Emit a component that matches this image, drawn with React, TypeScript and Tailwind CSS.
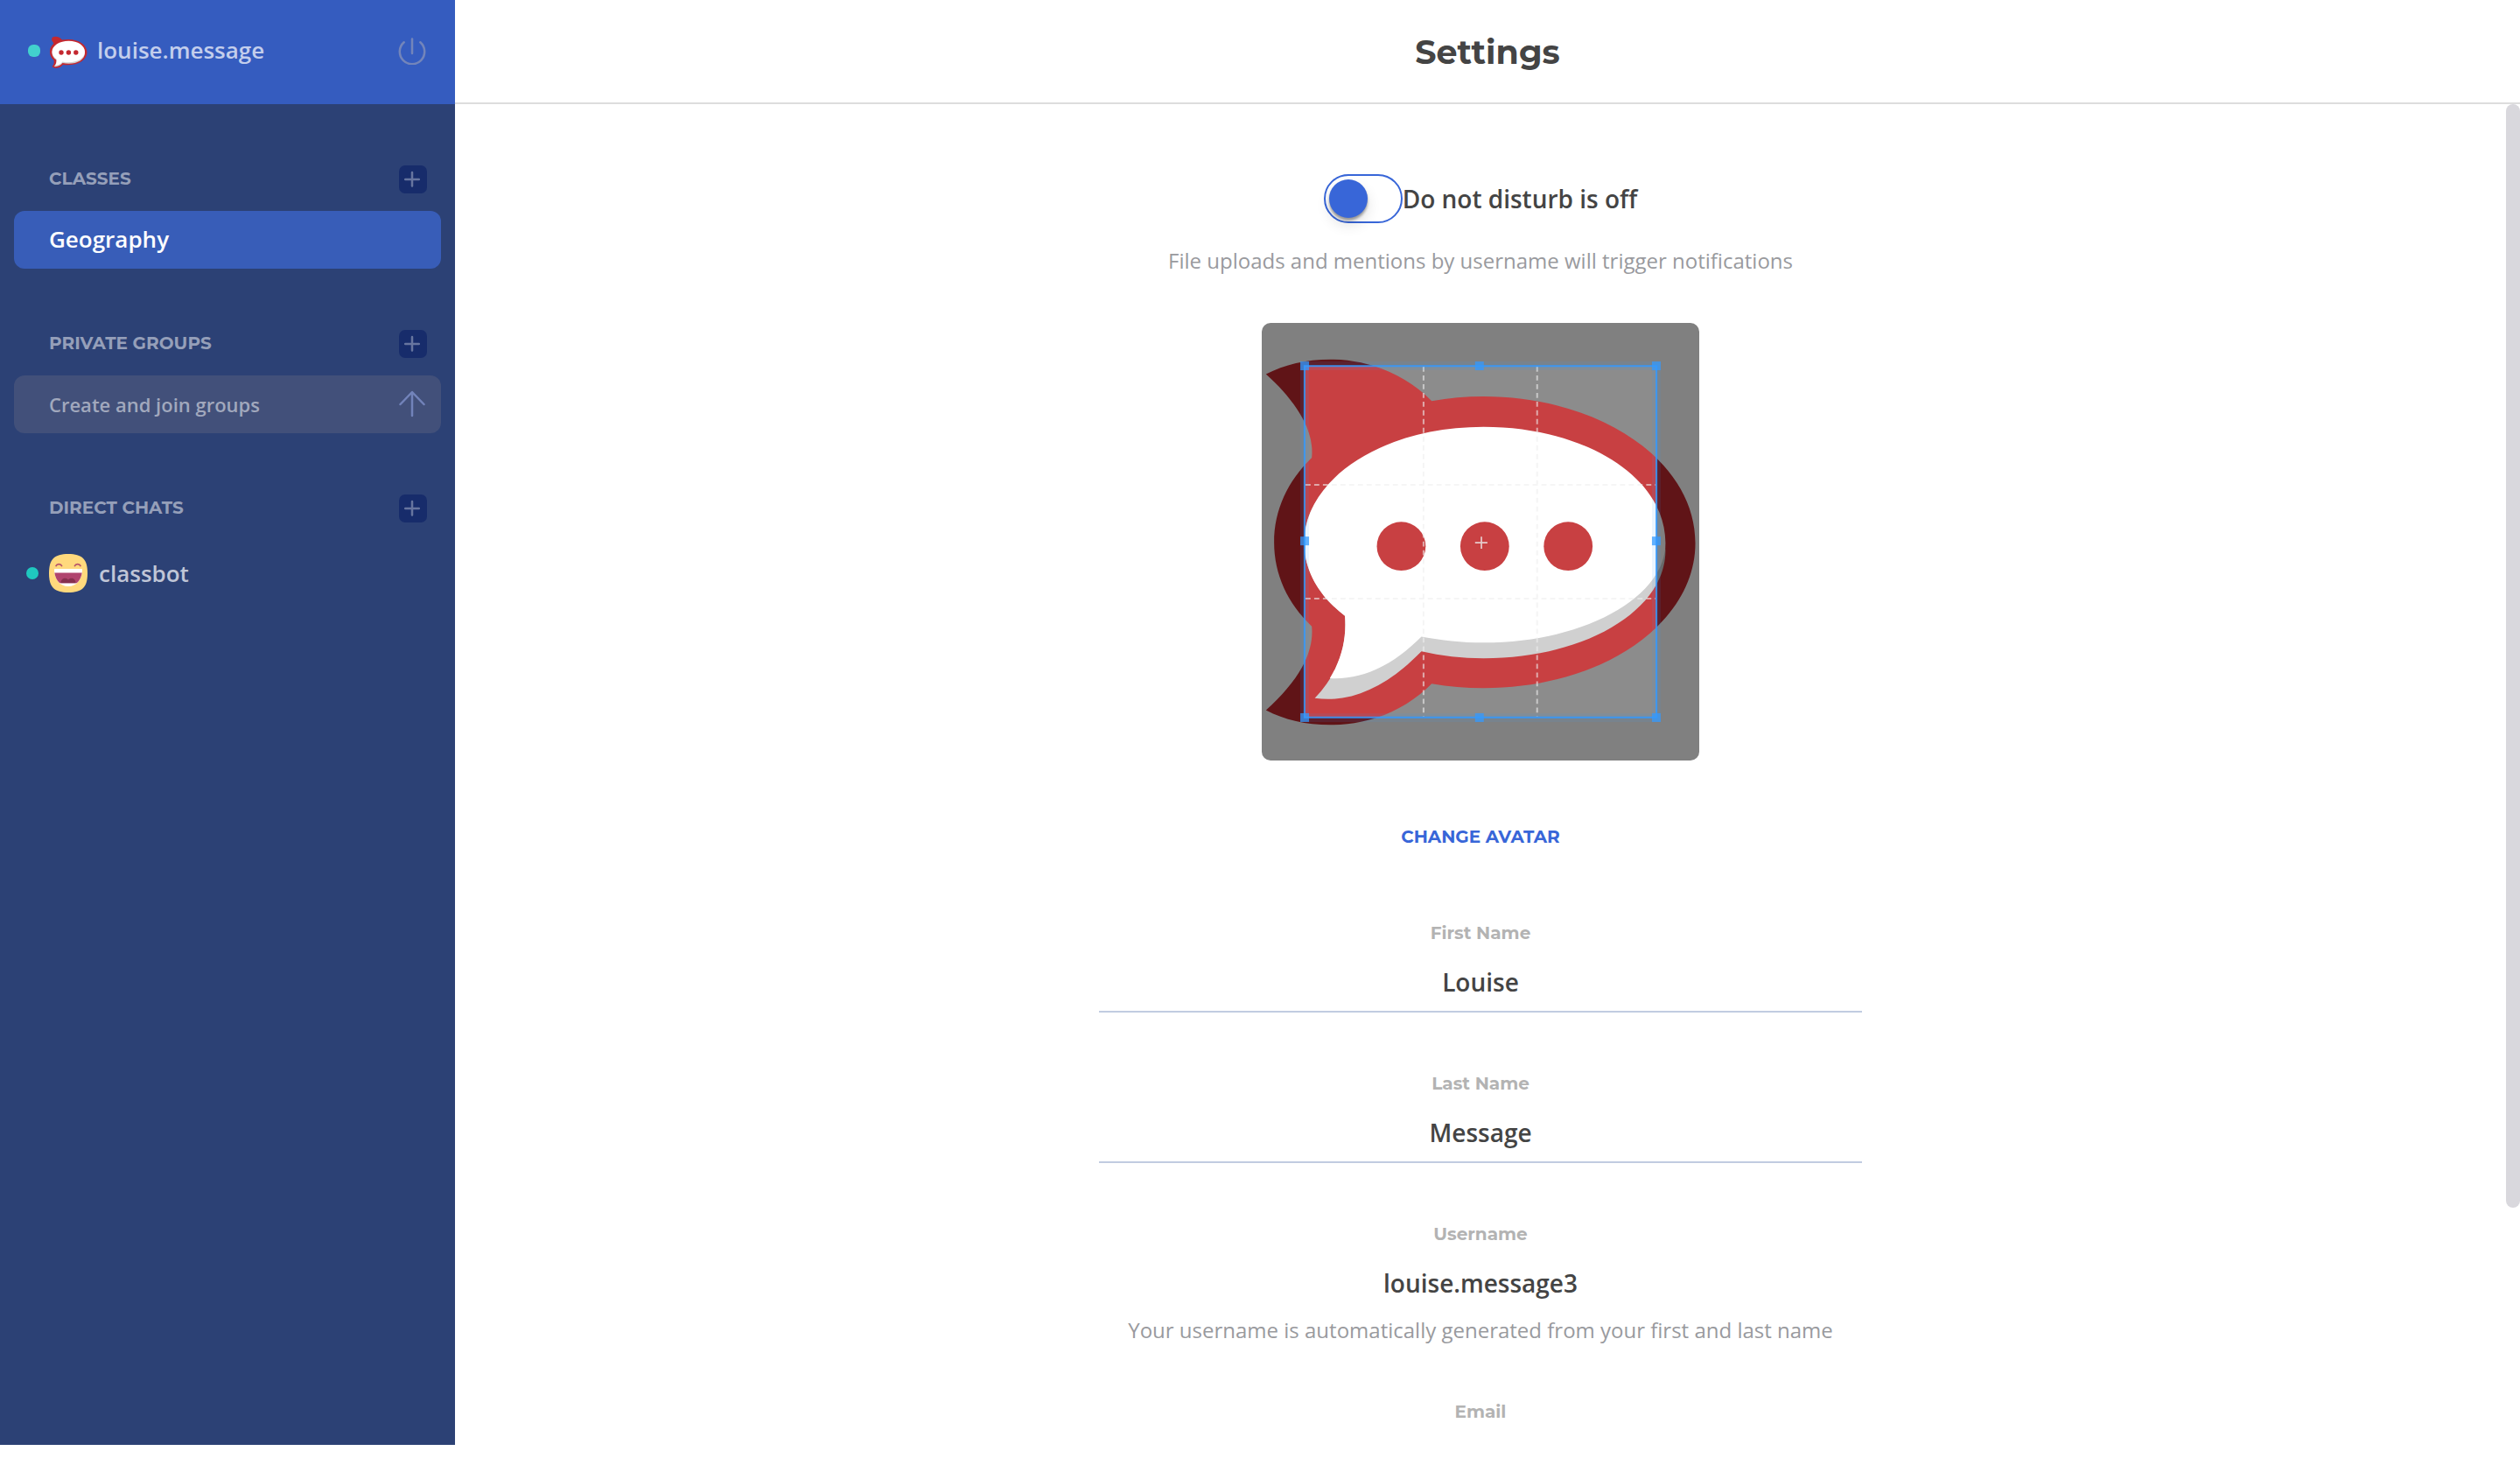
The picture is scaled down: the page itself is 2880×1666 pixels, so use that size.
import { useId, useState, type ReactNode } from "react";

const OPEN = "font-['Open_Sans',sans-serif]";
const HEAD = "font-['Montserrat','Inter',sans-serif] font-bold";

function ChatLogo() {
  return (
    <svg viewBox="0 -2 44 44" className="size-11 shrink-0" aria-hidden="true">
      <path
        d="M2.2 6C3 3.200 9.500 2.600 14 7.500C31 4.800 42.500 12.500 42.500 21.800C42.500 31.500 30 38 15 36C11 40.500 5 40.800 2.600 38C4.500 35.500 5 34 4.600 31C-1.500 25.500 -1.500 17 4.200 12C4.200 9.500 1.500 9 2.200 6Z"
        fill="#c4282f"
      />
      <path
        d="M21.500 10C32 10 40 15.200 40 22.500C40 29.800 32 34.800 21.500 34.800C19 34.800 16.800 34.600 14.500 34C12 37.200 8.500 38.600 4.600 38C6.800 36 7.600 33.500 7.400 30.600C4.500 28.500 2.500 25.700 2.500 22.500C2.500 15.200 11 10 21.500 10Z"
        fill="#cfcfcf"
      />
      <path
        d="M21.500 8.800C32 8.800 40 14.200 40 21.200C40 28.200 32 33.200 21.500 33.200C19 33.200 16.800 33 14.500 32.400C12 35.500 9.500 36.600 6.300 36.600C7.600 34.500 8 32 7.600 29.400C4.500 27.300 2.500 24.500 2.500 21.200C2.500 14.200 11 8.800 21.500 8.800Z"
        fill="#fff"
      />
      <g fill="#c4282f">
        <circle cx="13" cy="22" r="2.7" />
        <circle cx="21.400" cy="22" r="2.7" />
        <circle cx="29.800" cy="22" r="2.7" />
      </g>
    </svg>
  );
}

function LaughingFace() {
  return (
    <svg viewBox="0 0 44 44" className="size-11 shrink-0" aria-hidden="true">
      <path d="M22 0C38 0 44 6 44 22C44 38 38 44 22 44C6 44 0 38 0 22C0 6 6 0 22 0Z" fill="#ffd97d" />
      <g fill="none" stroke="#b8556b" strokeWidth="1.6" strokeLinecap="round">
        <path d="M8 13.6C9 10.9 13.6 10.9 14.6 13.6" />
        <path d="M29.4 13.6C30.4 10.9 35 10.9 36 13.6" />
      </g>
      <path d="M6 18C6 17.4 6.4 17 7 17H37C37.6 17 38 17.4 38 18C38 29 31.5 37 22 37C12.5 37 6 29 6 18Z" fill="#fff" />
      <path d="M6.3 21.5H37.7C36.9 26.5 34.9 30.7 31.8 33.3H12.2C9.1 30.7 7.1 26.5 6.3 21.5Z" fill="#b0446e" />
      <path d="M13.5 33.3C13 27.5 20 26 22 29.6C24 26 31 27.5 30.5 33.3Z" fill="#86304f" />
    </svg>
  );
}

function PowerIcon() {
  return (
    <svg viewBox="0 0 32 32" className="size-8" fill="none" stroke="currentColor" strokeWidth="2.5" strokeLinecap="round" aria-hidden="true">
      <path d="M16 2.5V19" />
      <path d="M6.7 6.3A14.2 14.2 0 1 0 25.3 6.3" />
    </svg>
  );
}

function ArrowUpIcon() {
  return (
    <svg viewBox="0 0 32 32" className="size-8" fill="none" stroke="currentColor" strokeWidth="2.5" strokeLinecap="round" strokeLinejoin="round" aria-hidden="true">
      <path d="M15 29V2.5M1.5 16L15 2L28.5 16" />
    </svg>
  );
}

function Section({ title, children }: { title: string; children: ReactNode }) {
  return (
    <section className="px-4">
      <div className="flex items-start justify-between pr-4 pl-10">
        <h2 className={`${HEAD} text-xl leading-[30px] text-[#959fb9]`}>{title}</h2>
        <button type="button" aria-label={`Add to ${title}`} className="flex size-8 items-center justify-center rounded-[7px] bg-[#172c6b] text-[#67759f]">
          <svg viewBox="0 0 32 32" className="size-8" stroke="currentColor" strokeWidth="2.5" strokeLinecap="round" aria-hidden="true">
            <path d="M15 8V23.500M7.200 16H22.800" />
          </svg>
        </button>
      </div>
      {children}
    </section>
  );
}

function Field({ label, value, help, readOnly = false }: { label: string; value: string; help?: string; readOnly?: boolean }) {
  const id = useId();
  return (
    <div className="flex w-full flex-col items-center">
      <label htmlFor={id} className={`${HEAD} text-xl leading-[26px] text-[#b3b3b3]`}>
        {label}
      </label>
      <input
        id={id}
        defaultValue={value}
        readOnly={readOnly}
        className={`${OPEN} mt-2.5 w-full bg-transparent text-center text-[28px] font-semibold text-[#444] outline-none ${
          readOnly ? "h-[66px]" : "h-[68px] border-b-2 border-[#c1cce1]"
        }`}
      />
      {help && <p className={`${OPEN} mt-[5px] text-2xl leading-8 text-[#999a9e]`}>{help}</p>}
    </div>
  );
}

const HANDLES = [
  [192, 183], [772, 183], [1359, 183],
  [192, 764], [1359, 764],
  [192, 1350], [772, 1350], [1359, 1350],
];

const SHAPE =
  "M78 225C140 193 210 176 292 176C420 176 540 225 628 314C685 304 740 299 800 299C1190 299 1503 515 1503 785C1503 1054 1190 1267 800 1267C740 1267 685 1262 628 1252C540 1341 420 1389 292 1389C210 1389 140 1372 78 1340C170 1258 240 1160 230 1062C150 985 105 890 105 783C105 675 150 580 230 502C240 406 170 308 78 225Z";
const SHADE =
  "M800 450C1135 450 1404 610 1404 810C1404 1010 1135 1168 800 1168C728 1168 660 1160 594 1145C480 1262 360 1318 240 1300C315 1222 348 1130 340 1027C258 965 205 880 205 785C205 560 465 450 800 450Z";
const BUBBLE =
  "M800 400C1135 400 1404 565 1404 785C1404 965 1135 1116 800 1116C728 1116 660 1108 594 1096C500 1190 400 1240 290 1234C330 1170 346 1100 340 1027C258 965 205 880 205 785C205 572 465 400 800 400Z";

function AvatarCropper() {
  return (
    <svg viewBox="64 55 1452 1452" className="size-[500px] rounded-[10px] bg-[#808080]" role="img" aria-label="Avatar crop area">
      <defs>
        <clipPath id="crop">
          <rect x="206" y="197" width="1168" height="1168" />
        </clipPath>
      </defs>
      <path d={SHAPE} fill="#601417" />
      <path d={SHADE} fill="#686868" />
      <path d={BUBBLE} fill="#808080" />
      <g clipPath="url(#crop)">
        <rect x="206" y="197" width="1168" height="1168" fill="#8c8c8c" />
        <path d={SHAPE} fill="#c84042" />
        <path d={SHADE} fill="#d0d0d0" />
        <path d={BUBBLE} fill="#fff" />
        <g fill="#c84042">
          <circle cx="527" cy="796" r="81" />
          <circle cx="804" cy="796" r="81" />
          <circle cx="1081" cy="796" r="81" />
        </g>
      </g>
      <g stroke="#eee" strokeOpacity="0.6" strokeWidth="6" strokeDasharray="17 12">
        <path d="M601 200V1362M978 200V1362M209 592H1371M209 970H1371" fill="none" />
      </g>
      <path d="M772 784H813M793 764V804" stroke="#eee" strokeOpacity="0.8" strokeWidth="5" />
      <rect x="206" y="197" width="1168" height="1168" fill="none" stroke="#3399ff" strokeOpacity="0.1" strokeWidth="29" />
      <rect x="206" y="198" width="1168" height="1166" fill="none" stroke="#3399ff" strokeOpacity="0.85" strokeWidth="6" />
      {HANDLES.map(([x, y]) => (
        <rect key={`${x}-${y}`} x={x} y={y} width="29" height="29" fill="#3399ff" fillOpacity="0.75" />
      ))}
    </svg>
  );
}

export default function App() {
  const [quiet, setQuiet] = useState(false);
  return (
    <div className="flex h-screen overflow-hidden bg-white">
      <aside className="mb-[15px] w-[520px] shrink-0 bg-[#2c4175]">
        <div className="flex h-[119px] items-center bg-[#355cbf] pr-[33px] pb-1 pl-8">
          <span className="size-3.5 rounded-[6px] bg-[#42d1cd]" />
          <span className="ml-[11px] flex">
            <ChatLogo />
          </span>
          <span className={`${OPEN} ml-2.5 flex-1 pb-0.5 text-[26px] leading-9 font-semibold text-[#c3ceec]`}>louise.message</span>
          <button type="button" aria-label="Log out" className="text-[#7385ba]">
            <PowerIcon />
          </button>
        </div>
        <nav className="flex flex-col gap-[70px] pt-[70px]">
          <Section title="CLASSES">
            <a href="#geography" className={`${OPEN} mt-5 flex h-[66px] items-center rounded-xl bg-[#385db8] pb-0.5 pl-10 text-[26px] font-semibold text-white`}>
              Geography
            </a>
          </Section>
          <Section title="PRIVATE GROUPS">
            <a href="#groups" className={`${OPEN} mt-5 flex h-[66px] items-center justify-between rounded-xl bg-[#42507a] pr-4 pl-10 text-[22px] font-semibold text-[#a1a8bd]`}>
              Create and join groups
              <span className="text-[#7283ba]">
                <ArrowUpIcon />
              </span>
            </a>
          </Section>
          <Section title="DIRECT CHATS">
            <a href="#classbot" className={`${OPEN} mt-[25px] flex h-[66px] items-center pl-3.5 text-[26px] font-semibold text-[#c0c6d7]`}>
              <span className="size-3.5 rounded-full bg-[#1fc8bf]" />
              <span className="mr-[13px] ml-3 flex">
                <LaughingFace />
              </span>
              classbot
            </a>
          </Section>
        </nav>
      </aside>

      <main className="flex min-w-0 flex-1 flex-col">
        <header className="flex h-[119px] shrink-0 items-center justify-center border-b-2 border-[#ddd] pt-0.5">
          <h1 className={`${HEAD} text-[38px] leading-[48px] text-[#444]`}>Settings</h1>
        </header>
        <div className="flex min-h-0 flex-1">
          <form className="flex min-w-0 flex-1 flex-col items-center overflow-hidden pt-20">
            <label className="flex shrink-0 items-center">
              <span className="relative flex">
                <input
                  type="checkbox"
                  role="switch"
                  checked={quiet}
                  onChange={(e) => setQuiet(e.target.checked)}
                  className="peer h-14 w-[90px] appearance-none rounded-full border-2 border-[#3866d8]"
                />
                <span className="absolute top-1.5 left-1.5 size-11 rounded-full bg-[#3866d8] shadow-[0_3px_3px_rgba(0,0,0,0.35),0_8px_16px_rgba(0,0,0,0.12)] peer-checked:left-10" />
              </span>
              <span className={`${OPEN} text-[28px] leading-10 font-semibold text-[#444]`}>Do not disturb is {quiet ? "on" : "off"}</span>
            </label>
            <p className={`${OPEN} mt-[27px] text-2xl leading-8 text-[#999a9e]`}>File uploads and mentions by username will trigger notifications</p>
            <div className="mt-[55px] shrink-0">
              <AvatarCropper />
            </div>
            <button type="button" className={`${HEAD} mt-[72px] text-xl leading-[30px] text-[#3866d8]`}>
              CHANGE AVATAR
            </button>
            <div className="mt-[82px] flex w-[872px] max-w-full flex-col">
              <div className="flex flex-col gap-[68px]">
                <Field label="First Name" value="Louise" />
                <Field label="Last Name" value="Message" />
                <Field label="Username" value="louise.message3" help="Your username is automatically generated from your first and last name" readOnly />
              </div>
              <div className="mt-16">
                <Field label="Email" value="" />
              </div>
            </div>
          </form>
          <div className="w-4 shrink-0" aria-hidden="true">
            <div className="h-[81.5%] rounded-full bg-[#d9d8dd]" />
          </div>
        </div>
      </main>
    </div>
  );
}
